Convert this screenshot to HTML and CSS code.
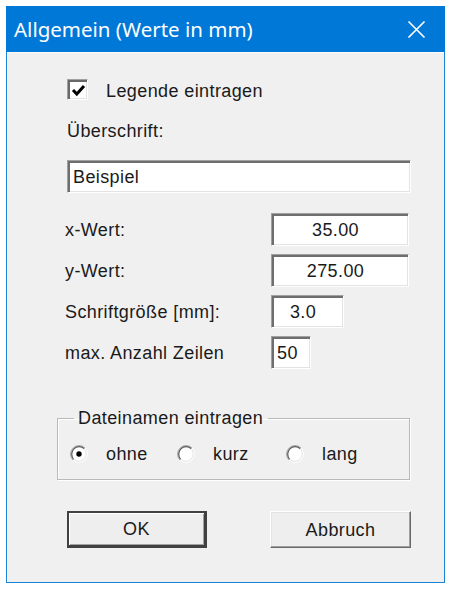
FILE: index.html
```html
<!DOCTYPE html>
<html lang="de">
<head>
<meta charset="utf-8">
<title>Allgemein (Werte in mm)</title>
<link rel="stylesheet" href="styles.css">
</head>
<body>
<div class="window">
  <div class="titlebar">
    <span class="title">Allgemein (Werte in mm)</span>
    <svg class="close" width="19" height="17" viewBox="0 0 19 17"><path d="M1.5 0.5 L17.5 16.5 M17.5 0.5 L1.5 16.5" stroke="#fff" stroke-width="1.6" fill="none"/></svg>
  </div>
  <div class="client">
    <div class="main">
      <div class="check-row">
        <span class="checkbox">
          <svg width="15" height="15" viewBox="0 0 15 15"><path d="M2 7 L5.8 11 L13 3" stroke="#000" stroke-width="3" fill="none" stroke-linejoin="miter"/></svg>
        </span>
        <span class="check-text">Legende eintragen</span>
      </div>
      <div class="label heading">Überschrift:</div>
      <div class="textbox wide">Beispiel</div>
      <div class="fields">
        <div class="field-label">x-Wert:</div>
        <div class="textbox num w137">35.00</div>
        <div class="field-label">y-Wert:</div>
        <div class="textbox num w137">275.00</div>
        <div class="field-label">Schriftgröße [mm]:</div>
        <div class="textbox num w73">3.0</div>
        <div class="field-label">max. Anzahl Zeilen</div>
        <div class="textbox left w40">50</div>
      </div>
    </div>
    <fieldset class="group">
      <legend>Dateinamen eintragen</legend>
      <div class="radios">
        <div class="radio-item">
          <svg class="radio" width="18" height="18" viewBox="0 0 18 18">
            <circle cx="9" cy="9" r="8" fill="#fff"/>
            <path d="M2.99 15.01 A8.5 8.5 0 0 1 15.01 2.99" stroke="#a0a0a0" stroke-width="1" fill="none"/>
            <path d="M3.7 14.3 A7.5 7.5 0 0 1 14.3 3.7" stroke="#5a5a5a" stroke-width="1.2" fill="none"/>
            <path d="M2.99 15.01 A8.5 8.5 0 0 0 15.01 2.99" stroke="#ffffff" stroke-width="1" fill="none"/>
            <path d="M3.7 14.3 A7.5 7.5 0 0 0 14.3 3.7" stroke="#e3e3e3" stroke-width="1" fill="none"/>
            <circle cx="9" cy="9" r="2.7" fill="#000"/>
          </svg>
          <span>ohne</span>
        </div>
        <div class="radio-item">
          <svg class="radio" width="18" height="18" viewBox="0 0 18 18">
            <circle cx="9" cy="9" r="8" fill="#fff"/>
            <path d="M2.99 15.01 A8.5 8.5 0 0 1 15.01 2.99" stroke="#a0a0a0" stroke-width="1" fill="none"/>
            <path d="M3.7 14.3 A7.5 7.5 0 0 1 14.3 3.7" stroke="#5a5a5a" stroke-width="1.2" fill="none"/>
            <path d="M2.99 15.01 A8.5 8.5 0 0 0 15.01 2.99" stroke="#ffffff" stroke-width="1" fill="none"/>
            <path d="M3.7 14.3 A7.5 7.5 0 0 0 14.3 3.7" stroke="#e3e3e3" stroke-width="1" fill="none"/>
          </svg>
          <span>kurz</span>
        </div>
        <div class="radio-item">
          <svg class="radio" width="18" height="18" viewBox="0 0 18 18">
            <circle cx="9" cy="9" r="8" fill="#fff"/>
            <path d="M2.99 15.01 A8.5 8.5 0 0 1 15.01 2.99" stroke="#a0a0a0" stroke-width="1" fill="none"/>
            <path d="M3.7 14.3 A7.5 7.5 0 0 1 14.3 3.7" stroke="#5a5a5a" stroke-width="1.2" fill="none"/>
            <path d="M2.99 15.01 A8.5 8.5 0 0 0 15.01 2.99" stroke="#ffffff" stroke-width="1" fill="none"/>
            <path d="M3.7 14.3 A7.5 7.5 0 0 0 14.3 3.7" stroke="#e3e3e3" stroke-width="1" fill="none"/>
          </svg>
          <span>lang</span>
        </div>
      </div>
    </fieldset>
    <div class="buttons">
      <div class="button default">OK</div>
      <div class="button">Abbruch</div>
    </div>
  </div>
</div>
</body>
</html>
```

FILE: styles.css
```css
* { box-sizing: border-box; }

html, body {
  margin: 0;
  padding: 0;
  background: #ffffff;
}

body {
  font-family: "Liberation Sans", Arial, sans-serif;
  font-size: 18px;
  line-height: 21px;
  letter-spacing: 0.4px;
  color: #1a1a1a;
}

.window {
  margin: 6px 0 0 6px;
  width: 439px;
  height: 577px;
  border: 1px solid #1883d7;
  border-top: none;
  background: #f0f0f0;
  display: flex;
  flex-direction: column;
}

.titlebar {
  height: 46px;
  margin: 0 -1px;
  background: #0078d7;
  display: flex;
  align-items: center;
  justify-content: space-between;
  padding: 0 19px 0 8px;
  flex-shrink: 0;
}

.title {
  font-family: "Noto Sans", "Open Sans", sans-serif;
  font-size: 20.5px;
  letter-spacing: 0;
  color: #ffffff;
  line-height: 24px;
  margin-top: -1px;
}

.close { display: block; }

.client {
  flex: 1;
  border-left: 1px solid #fcfcfc;
  border-top: 1px solid #fcfcfc;
  padding: 26px 0 0 49px;
}

.main {
  padding-left: 10px;
}

.check-row {
  display: flex;
  align-items: center;
  height: 21px;
}

.checkbox {
  width: 21px;
  height: 21px;
  background: #fff;
  border: 1px solid;
  border-color: #a0a0a0 #ffffff #ffffff #a0a0a0;
  box-shadow: inset 2px 2px #696969, inset -1px -1px #e3e3e3;
  display: flex;
  align-items: center;
  justify-content: center;
  padding: 1px 0 0 1px;
}

.checkbox svg { display: block; }

.check-text {
  margin-left: 18px;
  margin-top: 4px;
}

.label.heading {
  margin-top: 21px;
}

.textbox {
  height: 33px;
  background: #ffffff;
  border: 1px solid;
  border-color: #a0a0a0 #ffffff #ffffff #a0a0a0;
  box-shadow: inset 2px 2px #6e6e6e, inset -1px -1px #e3e3e3;
  display: flex;
  align-items: center;
  padding: 2px 3px 0 5px;
}

.textbox.wide {
  width: 344px;
  margin-top: 18px;
}

.fields {
  margin-top: 20px;
  display: grid;
  grid-template-columns: 204px auto;
  row-gap: 8px;
  align-items: center;
}

.field-label {
  margin-top: 1px;
  margin-left: -2px;
}

.textbox.num {
  justify-content: center;
  padding-right: 14px;
}

.textbox.left { justify-content: flex-start; padding-left: 5px; }

.w137 { width: 138px; }
.w73 { width: 73px; }
.w40 { width: 40px; }

.group {
  margin: 39px 0 0 0;
  width: 353px;
  border: 1px solid #b9b9b9;
  box-shadow: 1px 1px 0 #ffffff inset, 1px 1px 0 #ffffff;
  padding: 13px 0 16px 12px;
  min-width: 0;
}

.group legend {
  padding: 0 5px 0 4px;
  margin-left: 4px;
  line-height: 21px;
}

.radios {
  display: grid;
  grid-template-columns: 107px 109px auto;
  height: 21px;
  align-items: center;
}

.radio-item {
  display: flex;
  align-items: center;
}

.radio { display: block; flex-shrink: 0; }

.radio-item span {
  margin-left: 18px;
  margin-top: 2px;
}

.buttons {
  margin-top: 31px;
  padding-left: 10px;
  display: flex;
  gap: 63px;
}

.button {
  width: 141px;
  height: 37px;
  background: #eeeeee;
  border: 1px solid;
  border-color: #ffffff #696969 #696969 #ffffff;
  box-shadow: inset -1px -1px #a0a0a0, inset 1px 1px #e3e3e3;
  display: flex;
  align-items: center;
  justify-content: center;
  padding-top: 1px;
}

.button.default {
  width: 140px;
  border: 2px solid #404040;
  border-bottom-width: 3px;
  border-right-width: 3px;
  box-shadow: inset 1px 1px #ffffff, inset -1px -1px #a0a0a0;
}
```
